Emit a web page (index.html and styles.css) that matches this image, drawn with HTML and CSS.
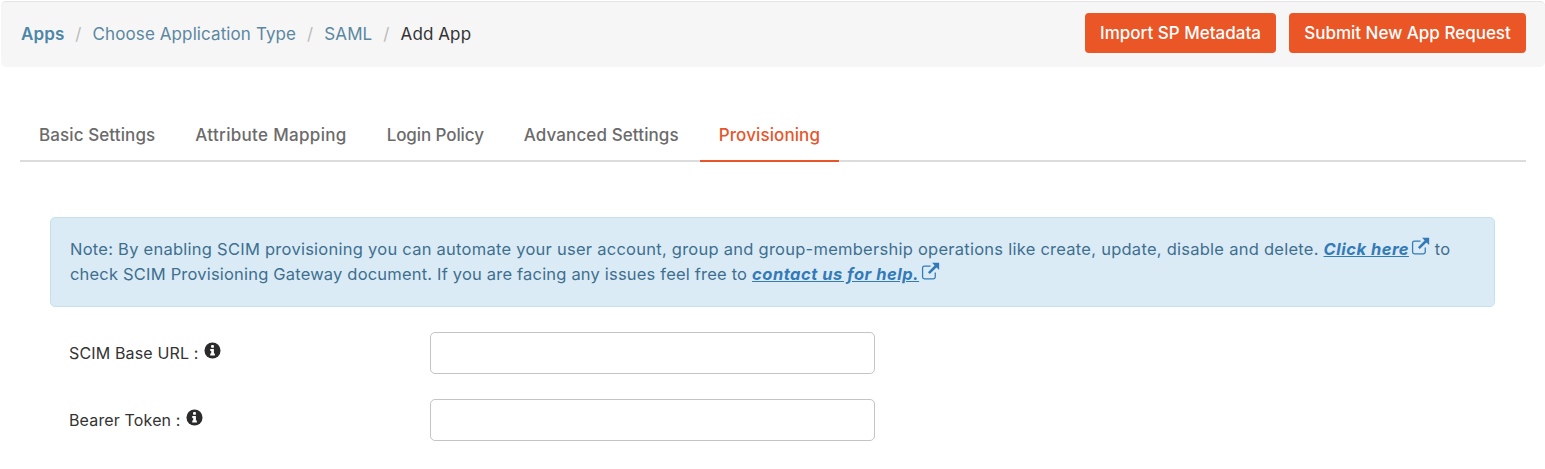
FILE: index.html
```html
<!DOCTYPE html>
<html lang="en">
<head>
<meta charset="utf-8">
<title>Add App</title>
<link rel="stylesheet" href="styles.css">
</head>
<body>
<svg class="defs" width="0" height="0" aria-hidden="true">
  <symbol id="ext" viewBox="0 0 18 18">
    <path d="M9 4H3.2A1.7 1.7 0 0 0 1.5 5.700V14.300A1.700 1.700 0 0 0 3.200 16H11.800A1.700 1.700 0 0 0 13.500 14.300V10" fill="none" stroke="currentColor" stroke-width="1.200"/>
    <path d="M10.500 0.800H17.200V7.500L14.700 5.100L8.300 11.400L6.600 9.700L12.900 3.300Z" fill="currentColor"/>
  </symbol>
  <symbol id="info" viewBox="0 0 18 18">
    <circle cx="9" cy="9" r="8.500" fill="currentColor"/>
    <rect x="7.500" y="3.300" width="3" height="2.800" rx=".5" fill="#fff"/>
    <path d="M6.600 7.400H10.500V12.300H11.500V14.400H6.600V12.300H7.600V9.500H6.600Z" fill="#fff"/>
  </symbol>
</svg>
<header class="topbar">
  <nav class="crumbs">
    <a class="crumb crumb-first" href="#">Apps</a>
    <span class="sep">/</span>
    <a class="crumb" href="#">Choose Application Type</a>
    <span class="sep">/</span>
    <a class="crumb" href="#">SAML</a>
    <span class="sep">/</span>
    <span class="crumb-current">Add App</span>
  </nav>
  <div class="actions">
    <button class="btn btn-import" type="button">Import SP Metadata</button>
    <button class="btn btn-submit" type="button">Submit New App Request</button>
  </div>
</header>
<main class="content">
  <div class="tabs">
    <a class="tab" href="#">Basic Settings</a>
    <a class="tab tab-wide" href="#">Attribute Mapping</a>
    <a class="tab tab-narrow" href="#">Login Policy</a>
    <a class="tab" href="#">Advanced Settings</a>
    <a class="tab tab-active" href="#">Provisioning</a>
  </div>
  <section class="panel">
    <div class="note">Note: By enabling SCIM provisioning you can automate your user account, group and group-membership operations like create, update, disable and delete. <a class="note-link" href="#">Click here</a><svg class="ext"><use href="#ext"/></svg> to <span class="note-tight">check SCIM Provisioning Gateway document. If you are facing any issues feel free to</span> <a class="note-link" href="#">contact us for help.</a><svg class="ext"><use href="#ext"/></svg></div>
    <div class="field">
      <label class="label">SCIM Base URL : <svg class="info"><use href="#info"/></svg></label>
      <input class="input" type="text">
    </div>
    <div class="field">
      <label class="label">Bearer Token : <svg class="info"><use href="#info"/></svg></label>
      <input class="input" type="text">
    </div>
  </section>
</main>
</body>
</html>
```
FILE: styles.css
```css
* { box-sizing: border-box; }
html, body { margin: 0; height: 469px; overflow: hidden; }
body {
  background: #fff;
  font-family: "Inter", "Liberation Sans", sans-serif;
  font-size: 16px;
  color: #333;
}
.defs { position: absolute; }
a { text-decoration: none; }

.topbar {
  margin: 1px 0 0 1px;
  height: 66px;
  padding: 0 19px 0 20px;
  display: flex;
  align-items: center;
  justify-content: space-between;
  background: #f6f6f7;
  border-top: 1px solid #e4e4e4;
  border-radius: 5px;
}
.crumbs { display: flex; align-items: center; font-size: 17px; letter-spacing: .1px; margin-top: -1px; }
.crumb { color: #5b87a0; }
.crumb-first { color: #4c87a8; font-weight: 600; }
.sep { color: #bbb; margin: 0 11px; }
.crumb-current { color: #333; }
.actions { display: flex; gap: 13px; margin-top: -4px; }
.btn {
  height: 40px;
  border: 0;
  border-radius: 4px;
  background: #ea5626;
  color: #fff;
  font: 500 17px "Inter", sans-serif;
  letter-spacing: 0;
  padding: 0;
}
.btn-import { width: 191px; }
.btn-submit { width: 237px; }

.content { padding: 0 19px 0 20px; }
.tabs {
  margin-top: 47px;
  height: 48px;
  display: flex;
  gap: 2px;
  border-bottom: 2px solid #dcdcdc;
}
.tab {
  padding: 0 19px;
  height: 48px;
  line-height: 43px;
  font-size: 17px;
  font-weight: 500;
  letter-spacing: .1px;
  color: #6b6b6b;
}
.tab-wide { letter-spacing: .32px; }
.tab-narrow { letter-spacing: -.1px; }
.tab-active { color: #e8552a; border-bottom: 2px solid #e8552a; }

.panel { padding: 55px 31px 0 30px; }
.note {
  height: 90px;
  padding: 19px 19px;
  background: #daebf6;
  border: 1px solid #c6e0ef;
  border-radius: 5px;
  color: #3f6f8f;
  font-size: 16.500px;
  line-height: 25px;
  letter-spacing: .255px;
}
.note-tight { letter-spacing: .19px; }
.note-link {
  color: #337ab7;
  font-weight: 700;
  font-style: italic;
  letter-spacing: .5px;
  text-decoration: underline;
}
.ext { width: 19px; height: 19px; color: #337ab7; margin-left: 2px; vertical-align: -1px; }
.field { display: flex; align-items: center; height: 42px; margin-top: 25px; }
.label { width: 380px; padding-left: 19px; color: #333; font-size: 16px; letter-spacing: .15px; margin-top: -2px; }
.info { width: 17px; height: 17px; color: #2b2b2b; margin-left: 1px; vertical-align: 0; }
.input {
  width: 445px;
  height: 42px;
  background: #fff;
  border: 1px solid #c4c4c4;
  border-radius: 5px;
}
```
